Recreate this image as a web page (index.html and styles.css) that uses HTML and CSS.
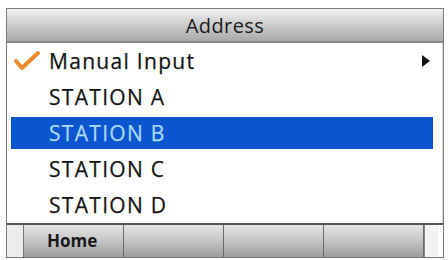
FILE: index.html
```html
<!DOCTYPE html>
<html>
<head>
<meta charset="utf-8">
<link rel="stylesheet" href="styles.css">
</head>
<body>
<div class="screen">
  <div class="header">Address</div>
  <div class="list">
    <div class="row">
      <svg class="check" width="28" height="22" viewBox="0 0 28 22"><path d="M3 11 L9 18 L25 3" fill="none" stroke="#ec8a2c" stroke-width="4" stroke-linecap="round" stroke-linejoin="round"/></svg>
      <span class="label">Manual Input</span>
      <svg class="arrow" width="9" height="12" viewBox="0 0 9 12"><path d="M1 0 L9 6 L1 12 Z" fill="#111"/></svg>
    </div>
    <div class="row"><span class="label">STATION A</span></div>
    <div class="row selected"><span class="label">STATION B</span></div>
    <div class="row"><span class="label">STATION C</span></div>
    <div class="row"><span class="label">STATION D</span></div>
  </div>
  <div class="footer">
    <div class="stub"></div>
    <div class="btn">Home</div>
    <div class="btn"></div>
    <div class="btn"></div>
    <div class="btn"></div>
    <div class="stub right"></div>
  </div>
</div>
</body>
</html>
```
FILE: styles.css
```css
html, body {
  margin: 0;
  padding: 0;
  background: #ffffff;
}
body {
  width: 448px;
  height: 260px;
  overflow: hidden;
  font-family: "Open Sans", "Noto Sans", sans-serif;
}
.screen {
  margin: 8px 2px 0 6px;
  width: 438px;
  height: 250px;
  border: 1px solid #7a7a7a;
  border-bottom: none;
  display: flex;
  flex-direction: column;
  box-sizing: border-box;
}
.header {
  height: 34px;
  box-sizing: border-box;
  border-bottom: 2px solid #8a8a8a;
  background: linear-gradient(#f2f2f2, #d2d2d2 40%, #a9a9a9);
  display: flex;
  align-items: center;
  justify-content: center;
  font-size: 20px;
  color: #1c1c1c;
  letter-spacing: 0.4px;
  padding-top: 1px;
}
.list {
  height: 180px;
  display: flex;
  flex-direction: column;
  border-right: 1px solid #d8d8d8;
}
.row {
  height: 36px;
  display: flex;
  align-items: center;
  position: relative;
  padding-left: 38px;
  margin: 0 9px 0 4px;
}
.row.selected {
  background: #0b56cf;
  height: 32px;
  margin-top: 2px;
  margin-bottom: 2px;
}
.label {
  font-size: 21px;
  color: #141414;
  letter-spacing: 1.3px;
  -webkit-text-stroke: 0.25px currentColor;
}
.selected .label {
  color: #aad6ff;
}
.check {
  position: absolute;
  left: 2px;
  top: 7px;
}
.arrow {
  position: absolute;
  right: 3px;
  top: 12px;
}
.footer {
  height: 36px;
  display: flex;
  border-top: 2px solid #555;
  box-sizing: border-box;
  border-bottom: 1px solid #777;
}
.stub {
  width: 16px;
  background: #ececec;
  border-right: 1px solid #777;
}
.stub.right {
  width: 13px;
  border-right: none;
  border-left: 1px solid #888;
  background: #f2f2f2;
}
.btn {
  width: 100px;
  border-right: 1px solid #6a6a6a;
  background: linear-gradient(#e4e4e4, #c8c8c8 45%, #9c9c9c);
  display: flex;
  align-items: center;
  padding-left: 23px;
  box-sizing: border-box;
  font-size: 17px;
  font-weight: bold;
  color: #1a1a1a;
}
.btn:last-of-type {
  border-right: none;
}
```
